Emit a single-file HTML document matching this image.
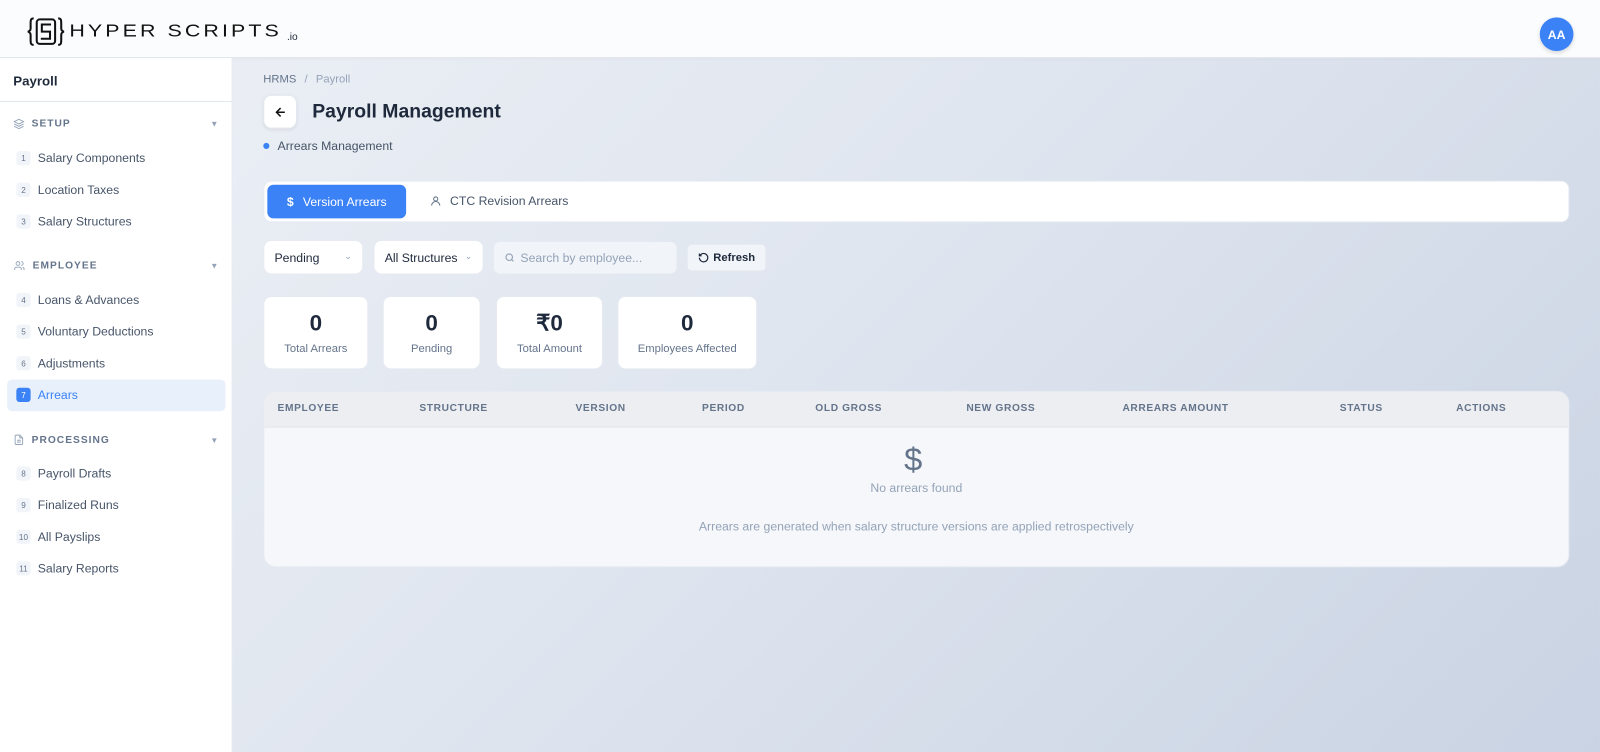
<!DOCTYPE html>
<html><head><meta charset="utf-8"><style>
*{box-sizing:border-box;margin:0;padding:0}
html,body{width:1600px;height:752px;overflow:hidden}
body{font-family:"Liberation Sans",sans-serif;background:linear-gradient(135deg,#eef1f6 0%,#dfe5ef 50%,#c9d3e3 100%);color:#1e293b}
#w{position:absolute;left:0;top:0;width:1568px;height:737px;transform:scale(1.020408);transform-origin:0 0}
.hdr{position:absolute;left:0;top:0;width:1568px;height:57px;background:#fbfcfd;border-bottom:1px solid #dfe3ea;box-shadow:0 1px 3px rgba(0,0,0,.05)}
.logo{position:absolute;left:27px;top:15px;display:flex;align-items:center;gap:5px}
.logo .t{font-size:21px;letter-spacing:3px;color:#111;font-weight:400;transform:scaleY(.8)}
.av{position:absolute;left:1509px;top:17px;width:33px;height:33px;border-radius:50%;background:#3b82f6;color:#fff;font-size:12px;font-weight:bold;display:flex;align-items:center;justify-content:center;box-shadow:0 2px 4px rgba(0,0,0,.15)}
.side{position:absolute;left:0;top:57px;width:228px;height:680px;background:#fff;border-right:1px solid #e2e8f0}
.side .ttl{height:43px;border-bottom:1px solid #e2e8f0;padding:15px 13px;font-size:13px;font-weight:bold;color:#1e293b}
.sec{position:absolute;left:13px;font-size:10px;font-weight:bold;letter-spacing:1px;color:#64748b;display:flex;align-items:center;gap:7px;width:202px}
.sec .ar{margin-left:auto;font-size:8px;color:#94a3b8}
.it{position:absolute;left:16px;font-size:12px;color:#475569;display:flex;align-items:center;gap:7px}
.it .n{width:14px;height:14px;border-radius:3px;background:#f1f5f9;font-size:8px;color:#64748b;display:flex;align-items:center;justify-content:center}
.act{position:absolute;left:7px;top:315px;width:214px;height:31px;background:#e8f0fc;border-radius:5px}
.main{position:absolute;left:258px}
.card{background:#fff;border-radius:8px;border:1px solid #e5e9f0}
.th{position:absolute;top:395px;font-size:10px;font-weight:bold;letter-spacing:.6px;color:#64748b}
</style></head><body><div id="w">
<div class="hdr">
 <div class="logo">
  <svg width="36" height="32" viewBox="0 0 36 32" fill="none" stroke="#111" stroke-width="2"><path d="M6 3c-3 0-3 2-3 5v5c0 2-2 3-3 3 1 0 3 1 3 3v5c0 3 0 5 3 5M30 3c3 0 3 2 3 5v5c0 2 2 3 3 3-1 0-3 1-3 3v5c0 3 0 5-3 5"/><rect x="9" y="4" width="18" height="24" rx="3"/><path d="M23 9h-9v7h8v7h-9"/></svg>
  <span class="t">HYPER SCRIPTS</span><span style="font-size:10px;margin-top:10px">.io</span>
 </div>
 <div class="av">AA</div>
</div>
<div class="side">
 <div class="ttl">Payroll</div>
 <div class="sec" style="top:59px"><svg width="11" height="11" viewBox="0 0 24 24" fill="none" stroke="#94a3b8" stroke-width="2"><path d="M12 2 2 7l10 5 10-5zM2 12l10 5 10-5M2 17l10 5 10-5"/></svg>SETUP<span class="ar">▼</span></div>
 <div class="it" style="top:91px"><span class="n">1</span>Salary Components</div>
 <div class="it" style="top:122px"><span class="n">2</span>Location Taxes</div>
 <div class="it" style="top:153px"><span class="n">3</span>Salary Structures</div>
 <div class="sec" style="top:198px"><svg width="12" height="11" viewBox="0 0 24 24" fill="none" stroke="#94a3b8" stroke-width="2"><circle cx="9" cy="7" r="4"/><path d="M2 21v-2a4 4 0 0 1 4-4h6a4 4 0 0 1 4 4v2M16 3a4 4 0 0 1 0 8M22 21v-2a4 4 0 0 0-3-4"/></svg>EMPLOYEE<span class="ar">▼</span></div>
 <div class="it" style="top:230px"><span class="n">4</span>Loans &amp; Advances</div>
 <div class="it" style="top:261px"><span class="n">5</span>Voluntary Deductions</div>
 <div class="it" style="top:292px"><span class="n">6</span>Adjustments</div>
 <div class="act"></div>
 <div class="it" style="top:323px;color:#3b82f6"><span class="n" style="background:#3b82f6;color:#fff">7</span>Arrears</div>
 <div class="sec" style="top:368px"><svg width="11" height="12" viewBox="0 0 24 24" fill="none" stroke="#94a3b8" stroke-width="2"><path d="M14 2H6a2 2 0 0 0-2 2v16a2 2 0 0 0 2 2h12a2 2 0 0 0 2-2V8zM14 2v6h6M8 13h8M8 17h8"/></svg>PROCESSING<span class="ar">▼</span></div>
 <div class="it" style="top:400px"><span class="n">8</span>Payroll Drafts</div>
 <div class="it" style="top:431px"><span class="n">9</span>Finalized Runs</div>
 <div class="it" style="top:462px"><span class="n">10</span>All Payslips</div>
 <div class="it" style="top:493px"><span class="n">11</span>Salary Reports</div>
</div>

<div class="main" style="top:72px;font-size:11px;color:#64748b">HRMS <span style="margin:0 5px;color:#94a3b8">/</span> <span style="color:#94a3b8">Payroll</span></div>
<div class="main card" style="top:93px;width:33px;height:33px;display:flex;align-items:center;justify-content:center;box-shadow:0 1px 3px rgba(0,0,0,.08)"><svg width="14" height="14" viewBox="0 0 24 24" fill="none" stroke="#111" stroke-width="2.5"><path d="M19 12H5M12 19l-7-7 7-7"/></svg></div>
<div class="main" style="left:306px;top:99px;font-size:19px;font-weight:bold;color:#1e293b">Payroll Management</div>
<div class="main" style="top:136px;font-size:12px;color:#475569;display:flex;align-items:center;gap:8px"><span style="width:6px;height:6px;border-radius:50%;background:#3b82f6"></span>Arrears Management</div>

<div class="main card" style="top:177px;width:1280px;height:41px"></div>
<div class="main" style="left:262px;top:181px;width:136px;height:33px;background:#3b82f6;border-radius:6px;color:#fff;font-size:12px;display:flex;align-items:center;justify-content:center;gap:9px"><span style="font-weight:bold">$</span>Version Arrears</div>
<div class="main" style="left:421px;top:190px;font-size:12px;color:#475569;display:flex;align-items:center;gap:8px"><svg width="12" height="12" viewBox="0 0 24 24" fill="none" stroke="#64748b" stroke-width="2"><circle cx="12" cy="8" r="4"/><path d="M4 21a8 8 0 0 1 16 0"/></svg>CTC Revision Arrears</div>

<div class="main card" style="top:235px;width:98px;height:34px;font-size:12px;padding:10px;display:flex;justify-content:space-between">Pending<span style="color:#94a3b8;font-size:9px">⌄</span></div>
<div class="main card" style="left:366px;top:235px;width:108px;height:34px;font-size:12px;padding:10px;display:flex;justify-content:space-between">All Structures<span style="color:#94a3b8;font-size:9px">⌄</span></div>
<div class="main" style="left:484px;top:237px;width:179px;height:31px;background:#f1f4f8;border-radius:6px;font-size:12px;color:#94a3b8;display:flex;align-items:center;padding-left:10px;gap:5px"><svg width="11" height="11" viewBox="0 0 24 24" fill="none" stroke="#94a3b8" stroke-width="2.5"><circle cx="11" cy="11" r="7"/><path d="m20 20-4-4"/></svg>Search by employee...</div>
<div class="main" style="left:673px;top:239px;width:78px;height:27px;background:#f1f4f8;border-radius:5px;border:1px solid #e5e9f0;font-size:11px;font-weight:bold;color:#1e293b;display:flex;align-items:center;justify-content:center;gap:4px"><svg width="11" height="11" viewBox="0 0 24 24" fill="none" stroke="#1e293b" stroke-width="2.5"><path d="M3 12a9 9 0 1 0 3-6.7L3 8M3 3v5h5"/></svg>Refresh</div>

<div class="main card" style="top:290px;width:103px;height:72px;text-align:center;padding-top:13px"><div style="font-size:22px;font-weight:bold">0</div><div style="font-size:11px;color:#64748b;margin-top:6px">Total Arrears</div></div>
<div class="main card" style="left:375px;top:290px;width:96px;height:72px;text-align:center;padding-top:13px"><div style="font-size:22px;font-weight:bold">0</div><div style="font-size:11px;color:#64748b;margin-top:6px">Pending</div></div>
<div class="main card" style="left:486px;top:290px;width:105px;height:72px;text-align:center;padding-top:13px"><div style="font-size:22px;font-weight:bold">₹0</div><div style="font-size:11px;color:#64748b;margin-top:6px">Total Amount</div></div>
<div class="main card" style="left:605px;top:290px;width:137px;height:72px;text-align:center;padding-top:13px"><div style="font-size:22px;font-weight:bold">0</div><div style="font-size:11px;color:#64748b;margin-top:6px">Employees Affected</div></div>

<div class="main" style="top:383px;width:1280px;height:173px;background:#f5f7fa;border-radius:12px;border:1px solid #e5e9f0;overflow:hidden"><div style="height:35px;background:#eceef2;border-bottom:1px solid #e2e6ec"></div></div>
<div class="th" style="left:272px">EMPLOYEE</div><div class="th" style="left:411px">STRUCTURE</div><div class="th" style="left:564px">VERSION</div><div class="th" style="left:688px">PERIOD</div><div class="th" style="left:799px">OLD GROSS</div><div class="th" style="left:947px">NEW GROSS</div><div class="th" style="left:1100px">ARREARS AMOUNT</div><div class="th" style="left:1313px">STATUS</div><div class="th" style="left:1427px">ACTIONS</div>
<div style="position:absolute;left:886px;top:432px;font-size:32px;color:#64748b;font-weight:300">$</div>
<div style="position:absolute;left:0;width:1796px;top:471px;text-align:center;font-size:12px;color:#94a3b8">No arrears found</div>
<div style="position:absolute;left:0;width:1796px;top:509px;text-align:center;font-size:12px;color:#94a3b8">Arrears are generated when salary structure versions are applied retrospectively</div>
</div></body></html>
